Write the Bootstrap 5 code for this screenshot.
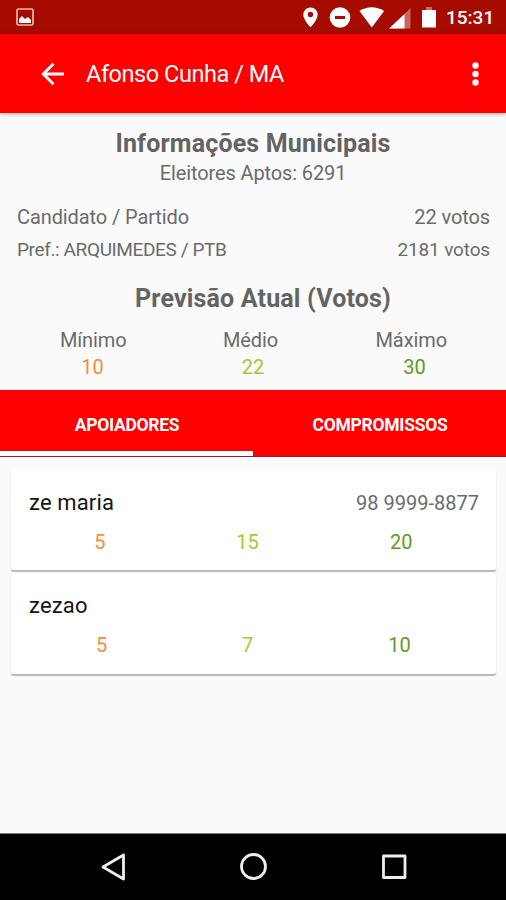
<!DOCTYPE html>
<html lang="pt-BR">
<head>
<meta charset="utf-8">
<meta name="viewport" content="width=device-width, initial-scale=1">
<title>Afonso Cunha / MA</title>
<link href="https://cdn.jsdelivr.net/npm/bootstrap@5.3.0/dist/css/bootstrap.min.css" rel="stylesheet">
<style>
body{font-family:Roboto,"Noto Sans",sans-serif;background:#fafafa;color:#6b6b6b;font-size:20px;width:506px;height:900px;overflow:hidden}
svg{display:block;flex:none}
.status-strip{height:34px;background:#a50b00;padding:0 9px 0 16px}
.clock{font-size:19px;font-weight:500;line-height:37px;width:51px;white-space:nowrap;margin-left:7px}
.app-toolbar{height:79px;background:#f00;padding:0 27px 0 41px;box-shadow:0 1px 4px rgba(0,0,0,.35);z-index:1}
.app-title{font-size:23.5px;line-height:79px;margin-left:21px;letter-spacing:-.45px;padding-top:2px}
.summary{height:277px;padding-top:17px}
.head-text{font-size:25px;font-weight:700;line-height:28px;color:#636363;letter-spacing:.17px}
.voters{line-height:31px;letter-spacing:-.12px}
.info-line{height:33px;line-height:33px;padding:0 16px 0 17px;letter-spacing:-.1px}
.info-first{margin-top:12px}
.pref{font-size:19px;line-height:31px;letter-spacing:-.38px}
.pref-votes{font-size:19px;line-height:31px;letter-spacing:-.15px}
.forecast{line-height:31px;margin-top:16px;margin-bottom:13px;padding-left:20px}
.trio{display:grid;text-align:center;white-space:nowrap}
.trio-labels{grid-template-columns:186.5px 128px 193.5px;line-height:26px;letter-spacing:-.1px}
.trio-values{grid-template-columns:185px 136px 187px;line-height:28px}
.trio-first{grid-template-columns:177.5px 118px 189.5px;line-height:46px}
.trio-second{grid-template-columns:181px 111px 193px;line-height:45px}
.c-min{color:#f98a37}.c-med{color:#a2cb2f}.c-max{color:#5d9d22}
.tab-strip{height:67px;background:#f00;border-bottom:1px solid #8d2020}
.tab-strip .nav-link{height:66px;line-height:70px;padding:0 0 0 1px;font-size:17.5px;font-weight:700;color:#fff;border-radius:0;border-bottom:0 solid #fff;letter-spacing:-.27px}
.tab-strip .nav-link.active{border-bottom-width:5px}
.supporters{padding:12px 10px 0 11px;gap:3px}
.supporter{height:101px;border:0;border-radius:2px;background:#fff;box-shadow:0 2px 1px rgba(0,0,0,.26);padding-top:17px}
.supporter-head{height:33px;line-height:33px;padding:0 17px 0 18px}
.supporter-name{font-size:22px;color:#151515;letter-spacing:.15px}
.phone{padding-top:1px}
.name-second{line-height:31px}
.system-nav{height:67px;background:#000;border-top:1px solid #777}
</style>
<script src="https://cdn.jsdelivr.net/npm/bootstrap@5.3.0/dist/js/bootstrap.bundle.min.js"></script>
</head>
<body class="d-flex flex-column">
<div class="status-strip d-flex align-items-center text-white">
  <svg width="18" height="18" viewBox="0 0 18 18"><rect x="1" y="1" width="16" height="16" rx="1.5" fill="none" stroke="#eab9b4" stroke-width="1.7"/><path d="M3 15v-4l3-3 3 3 3-2 3 3v3z" fill="#fff"/></svg>
  <svg class="ms-auto" width="137" height="34" viewBox="0 0 137 34" fill="#fff">
    <path fill-rule="evenodd" d="M8.500 7.500a7.200 7.200 0 0 0-7.200 7.200c0 5 7.200 12.600 7.200 12.600s7.200-7.600 7.200-12.600a7.200 7.200 0 0 0-7.200-7.200zm0 4.300a2.700 2.700 0 1 1 0 5.400 2.700 2.700 0 0 1 0-5.400z"/>
    <path fill-rule="evenodd" d="M38 7.200a10.300 10.300 0 1 0 0 20.600 10.300 10.300 0 0 0 0-20.600zM33 16h10v3H33z"/>
    <path d="M57.500 11q12.300-7.500 24.600 0L69.800 27.500z"/>
    <path d="M108.500 8v20.500H88z" fill-opacity=".38"/><path d="M102.500 14v14.500H87z"/>
    <path d="M120 10h14v17.500h-14z"/><path d="M124 7h6v3h-6z" fill-opacity=".4"/>
  </svg>
  <span class="clock">15:31</span>
</div>
<header class="app-toolbar d-flex align-items-center text-white position-relative">
  <svg width="24" height="24" viewBox="0 0 24 24" fill="none" stroke="#fff" stroke-width="2.900"><path d="M23 12H3M12.500 1.800 2.300 12l10.200 10.200"/></svg>
  <span class="app-title">Afonso Cunha / MA</span>
  <svg class="ms-auto" width="7" height="24" viewBox="0 0 7 24" fill="#fff"><circle cx="3.500" cy="3.500" r="3.200"/><circle cx="3.500" cy="12" r="3.200"/><circle cx="3.500" cy="20.500" r="3.200"/></svg>
</header>
<section class="summary">
  <h1 class="head-text text-center m-0">Informações Municipais</h1>
  <div class="voters text-center">Eleitores Aptos: 6291</div>
  <div class="info-line info-first d-flex justify-content-between"><span>Candidato / Partido</span><span>22 votos</span></div>
  <div class="info-line d-flex justify-content-between"><span class="pref">Pref.: ARQUIMEDES / PTB</span><span class="pref-votes">2181 votos</span></div>
  <h2 class="head-text forecast text-center">Previsão Atual (Votos)</h2>
  <div class="trio trio-labels"><span>Mínimo</span><span>Médio</span><span>Máximo</span></div>
  <div class="trio trio-values"><span class="c-min">10</span><span class="c-med">22</span><span class="c-max">30</span></div>
</section>
<nav class="tab-strip nav nav-fill flex-nowrap">
  <a class="nav-link active w-50" href="#">APOIADORES</a>
  <a class="nav-link w-50" href="#">COMPROMISSOS</a>
</nav>
<main class="supporters d-flex flex-column flex-grow-1">
  <article class="card supporter">
    <div class="supporter-head d-flex justify-content-between"><span class="supporter-name">ze maria</span><span class="phone">98 9999-8877</span></div>
    <div class="trio trio-first"><span class="c-min">5</span><span class="c-med">15</span><span class="c-max">20</span></div>
  </article>
  <article class="card supporter">
    <div class="supporter-head d-flex justify-content-between"><span class="supporter-name name-second">zezao</span></div>
    <div class="trio trio-second"><span class="c-min">5</span><span class="c-med">7</span><span class="c-max">10</span></div>
  </article>
</main>
<footer class="system-nav d-flex align-items-center">
  <svg width="506" height="66" viewBox="0 0 506 66" fill="none" stroke="#eee" stroke-width="2.800" stroke-linejoin="round"><path d="M123.500 21v24L103 33z"/><circle cx="253.500" cy="32.500" r="12"/><rect x="383.500" y="22" width="21.500" height="21.500"/></svg>
</footer>
</body>
</html>
